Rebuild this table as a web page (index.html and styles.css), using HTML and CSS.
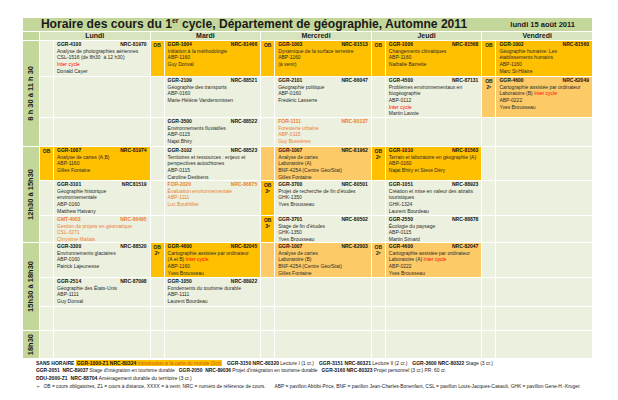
FILE: index.html
```html
<!DOCTYPE html>
<html lang="fr">
<head>
<meta charset="utf-8">
<title>Horaire des cours</title>
<link rel="stylesheet" href="styles.css">
</head>
<body>
<div class="sheet">
  <div class="titlebar">
    <div class="title">Horaire des cours du 1<sup class="sup">er</sup> cycle, Département de géographie, Automne 2011</div>
    <div class="date">lundi 15 août 2011</div>
  </div>
  <div class="corner"></div>
  <div class="day">Lundi</div>
  <div class="day">Mardi</div>
  <div class="day">Mercredi</div>
  <div class="day">Jeudi</div>
  <div class="day">Vendredi</div>

  <!-- r1 -->
  <div class="time span3"><span>8 h 30 à 11 h 30</span></div>
  <div class="ob"></div>
  <div class="cell"><div class="hd"><span>GGR-4100</span><span>NRC-81970</span></div>Analyse de photographies aériennes<br>CSL-1516 (de 8h30&nbsp; à 12 h30)<br><span class="red">Inter cycle</span><br>Donald Cayer</div>
  <div class="ob o">OB</div>
  <div class="cell o"><div class="hd"><span>GGR-1004</span><span>NRC-81466</span></div>Initiation à la méthodologie<br>ABP-1160<br>Guy Donval</div>
  <div class="ob o">OB</div>
  <div class="cell o"><div class="hd"><span>GGR-1003</span><span>NRC-81513</span></div>Dynamique de la surface terrestre<br>ABP-1160<br>(à venir)</div>
  <div class="ob o">OB</div>
  <div class="cell o"><div class="hd"><span>GGR-1006</span><span>NRC-81568</span></div>Changements climatiques<br>ABP-1160<br>Nathalie Barrette</div>
  <div class="ob o">OB</div>
  <div class="cell o"><div class="hd"><span>GGR-1002</span><span>NRC-81560</span></div>Géographie humaine: Les<br>établissements humains<br>ABP-1160<br>Marc St-Hilaire</div>

  <!-- r2 -->
  <div class="ob"></div>
  <div class="cell"></div>
  <div class="ob"></div>
  <div class="cell"><div class="hd"><span>GGR-2109</span><span>NRC-88521</span></div>Géographie des transports<br>ABP-0160<br>Marie-Hélène Vandersmissen</div>
  <div class="ob"></div>
  <div class="cell"><div class="hd"><span>GGR-2101</span><span>NRC-86047</span></div>Géographie politique<br>ABP-0160<br>Frédéric Lasserre</div>
  <div class="ob"></div>
  <div class="cell"><div class="hd"><span>GGR-4500</span><span>NRC-87131</span></div>Problèmes environnementaux en<br>biogéographie<br>ABP-0112<br><span class="red">Inter cycle</span><br>Martin Lavoie</div>
  <div class="ob lo">OB<br>2<sup class="sup2">e</sup></div>
  <div class="cell lo"><div class="hd"><span>GGR-4600</span><span>NRC-82049</span></div>Cartographie assistée par ordinateur<br>Laboratoire (B) <span class="red">Inter cycle</span><br>ABP-0222<br>Yves Brousseau</div>

  <!-- r3 -->
  <div class="ob"></div>
  <div class="cell"></div>
  <div class="ob"></div>
  <div class="cell"><div class="hd"><span>GGR-3500</span><span>NRC-88522</span></div>Environnements fluviatiles<br>ABP-0115<br>Najat Bhiry</div>
  <div class="ob"></div>
  <div class="cell ot"><div class="hd"><span>FOR-1111</span><span>NRC-80137</span></div>Foresterie urbaine<br>ABP-0115<br>Guy Bussières</div>
  <div class="ob"></div>
  <div class="cell"></div>
  <div class="ob"></div>
  <div class="cell"></div>

  <!-- r4 -->
  <div class="time span3"><span>12h30 à 15h30</span></div>
  <div class="ob o">OB</div>
  <div class="cell o"><div class="hd"><span>GGR-1007</span><span>NRC-81974</span></div>Analyse de cartes (A,B)<br>ABP-1160<br>Gilles Fontaine</div>
  <div class="ob"></div>
  <div class="cell"><div class="hd"><span>GGR-3102</span><span>NRC-88523</span></div>Territoires et ressources : enjeux et<br>perspectives autochtones<br>ABP-0115<br>Caroline Desbiens</div>
  <div class="ob lo"></div>
  <div class="cell lo"><div class="hd"><span>GGR-1007</span><span>NRC-81962</span></div>Analyse de cartes<br>Laboratoire (A)<br>BNF-4254 (Centre Géo/Stat)<br>Gilles Fontaine</div>
  <div class="ob o">OB<br>2<sup class="sup2">e</sup></div>
  <div class="cell o"><div class="hd"><span>GGR-1010</span><span>NRC-81563</span></div>Terrain et laboratoire en géographie (A)<br>ABP-0160<br>Najat Bhiry et Steve Déry</div>
  <div class="ob"></div>
  <div class="cell"></div>

  <!-- r5 -->
  <div class="ob"></div>
  <div class="cell"><div class="hd"><span>GGR-3101</span><span>NRC81519</span></div>Géographie historique<br>environnementale<br>ABP-0160<br>Matthew Hatvany</div>
  <div class="ob"></div>
  <div class="cell ot"><div class="hd"><span>FOR-2020</span><span>NRC-86875</span></div>Évaluation environnementale<br>ABP-1111<br>Luc Bouthillier</div>
  <div class="ob o">OB<br>3<sup class="sup2">e</sup></div>
  <div class="cell"><div class="hd"><span>GGR-3700</span><span>NRC-80501</span></div>Projet de recherche de fin d'études<br>GHK-1350<br>Yves Brousseau</div>
  <div class="ob"></div>
  <div class="cell"><div class="hd"><span>GGR-1051</span><span>NRC-88923</span></div>Création et mise en valeur des attraits<br>touristiques<br>GHK-1324<br>Laurent Bourdeau</div>
  <div class="ob"></div>
  <div class="cell"></div>

  <!-- r6 -->
  <div class="ob"></div>
  <div class="cell ot"><div class="hd"><span>GMT-4003</span><span>NRC-86495</span></div>Gestion de projets en géomatique<br>CSL-3271<br>Chrystine Maltais</div>
  <div class="ob"></div>
  <div class="cell"></div>
  <div class="ob o">OB<br>3<sup class="sup2">e</sup></div>
  <div class="cell"><div class="hd"><span>GGR-3701</span><span>NRC-80502</span></div>Stage de fin d'études<br>GHK-1350<br>Yves Brousseau</div>
  <div class="ob"></div>
  <div class="cell"><div class="hd"><span>GGR-2550</span><span>NRC-88878</span></div>Écologie du paysage<br>ABP-0115<br>Martin Simard</div>
  <div class="ob"></div>
  <div class="cell"></div>

  <!-- r7 -->
  <div class="time span3"><span>15h30 à 18h30</span></div>
  <div class="ob"></div>
  <div class="cell"><div class="hd"><span>GGR-3300</span><span>NRC-88520</span></div>Environnements glaciaires<br>ABP-0160<br>Patrick Lajeunesse</div>
  <div class="ob o">OB<br>2<sup class="sup2">e</sup></div>
  <div class="cell o"><div class="hd"><span>GGR-4600</span><span>NRC-82045</span></div>Cartographie assistée par ordinateur<br>(A et B) <span class="red">Inter cycle</span><br>ABP-1160<br>Yves Brousseau</div>
  <div class="ob lo"></div>
  <div class="cell lo"><div class="hd"><span>GGR-1007</span><span>NRC-82003</span></div>Analyse de cartes<br>Laboratoire (B)<br>BNF-4254 (Centre Géo/Stat)<br>Gilles Fontaine</div>
  <div class="ob lo">OB<br>2<sup class="sup2">e</sup></div>
  <div class="cell lo"><div class="hd"><span>GGR-4600</span><span>NRC-82047</span></div>Cartographie assistée par ordinateur<br>Laboratoire (A) <span class="red">Inter cycle</span><br>ABP-0222<br>Yves Brousseau</div>
  <div class="ob"></div>
  <div class="cell"></div>

  <!-- r8 -->
  <div class="ob"></div>
  <div class="cell"><div class="hd"><span>GGR-2514</span><span>NRC-87098</span></div>Géographie des États-Unis<br>ABP-1111<br>Guy Donval</div>
  <div class="ob"></div>
  <div class="cell"><div class="hd"><span>GGR-1050</span><span>NRC-88922</span></div>Fondements du tourisme durable<br>ABP-1111<br>Laurent Bourdeau</div>
  <div class="ob"></div>
  <div class="cell"></div>
  <div class="ob"></div>
  <div class="cell"></div>
  <div class="ob"></div>
  <div class="cell"></div>

  <!-- r9 -->
  <div class="ob"></div>
  <div class="cell"></div>
  <div class="ob"></div>
  <div class="cell"></div>
  <div class="ob"></div>
  <div class="cell"></div>
  <div class="ob"></div>
  <div class="cell"></div>
  <div class="ob"></div>
  <div class="cell"></div>

  <!-- r10 -->
  <div class="time"><span>18h30</span></div>
  <div class="ob"></div>
  <div class="cell"></div>
  <div class="ob"></div>
  <div class="cell"></div>
  <div class="ob"></div>
  <div class="cell"></div>
  <div class="ob"></div>
  <div class="cell"></div>
  <div class="ob"></div>
  <div class="cell"></div>
</div>

<div class="foot">
  <div class="l1"><b>SANS HORAIRE</b> <span class="hl"><b>GGR-1000-Z1 NRC-80324</b> <span class="hlt">Introduction à la carte du monde (3cr)</span></span><span class="g"><b>GGR-3150 NRC-80320</b> Lecture I (1 cr.)</span><span class="g"><b>GGR-3151 NRC-80321</b> Lecture II (2 cr.)</span><span class="g"><b>GGR-3600 NRC-80322</b> Stage (3 cr.)</span></div>
  <div class="l2"><b>GGR-2051</b>&nbsp; <b>NRC-89037</b> Stage d'intégration en tourisme durable<span class="g"><b>GGR-2050</b>&nbsp; <b>NRC-89036</b> Projet d'intégration en tourisme durable</span><span class="g"><b>GGR-3160 NRC-80323</b> Projet personnel (3 cr.) PR: 60 cr.</span></div>
  <div class="l3"><b>DDU-2000-Z1&nbsp; NRC-88704</b> Aménagement durable du territoire (3 cr.)</div>
  <div class="l4"><span class="arrow">➢</span> OB = cours obligatoires, Z1 = cours à distance, XXXX = à venir, NRC = numéro de référence de cours.<span class="g2">ABP = pavillon Abitibi-Price, BNF = pavillon Jean-Charles-Bonenfant, CSL = pavillon Louis-Jacques-Casault, GHK = pavillon Gene-H.-Kruger.</span></div>
</div>
</body>
</html>
```

FILE: styles.css
```css
html, body {
  margin: 0;
  padding: 0;
  background: #ffffff;
}

body {
  font-family: "Liberation Sans", Arial, sans-serif;
  color: #1f1f1f;
}

.sheet {
  margin: 18px 0 0 23px;
  width: 569px;
  display: grid;
  grid-template-columns: 16px repeat(5, 13px 95.6px);
  grid-template-rows: 13px 8px 35px 40px 28px 33px 34px 26px 34px 28px 23px 27px;
  gap: 1px;
  background: #ffffff;
}

.titlebar {
  grid-column: 1 / -1;
  background: #c4d79b;
  display: flex;
  align-items: center;
}

.title {
  width: 462px;
  text-align: center;
  font-weight: bold;
  font-size: 12.1px;
  line-height: 13px;
  color: #1a1a1a;
  white-space: nowrap;
}

.sup {
  font-size: 7px;
  line-height: 0;
  vertical-align: 5px;
}

.date {
  flex: 1;
  text-align: right;
  padding-right: 17px;
  font-size: 7.5px;
  font-weight: bold;
  line-height: 13px;
  color: #1a1a1a;
  white-space: nowrap;
}

.corner {
  background: #c4d79b;
}

.day {
  grid-column: span 2;
  background: #d7e4bd;
  text-align: center;
  font-weight: bold;
  font-size: 7px;
  line-height: 8px;
  color: #1a1a1a;
}

.time {
  grid-column: 1;
  background: #c4d79b;
  display: flex;
  align-items: center;
  justify-content: center;
}

.span3 {
  grid-row: span 3;
}

.time span {
  writing-mode: vertical-rl;
  transform: rotate(180deg);
  font-weight: bold;
  font-size: 7.5px;
  line-height: 8px;
  white-space: nowrap;
  color: #1a1a1a;
}

.ob,
.cell {
  background: #ebf1de;
  font-size: 5px;
  line-height: 6.6px;
  overflow: hidden;
  white-space: nowrap;
}

.ob {
  text-align: center;
  font-weight: bold;
  padding-top: 0.5px;
  color: #1a1a1a;
}

.cell {
  padding: 0.3px 3px 0;
  color: #2a2a2a;
}

.hd {
  display: flex;
  justify-content: space-between;
  font-weight: bold;
  color: #111111;
}

.o {
  background: #ffc000;
}

.lo {
  background: #fdca68;
}

.ot,
.ot .hd {
  color: #ed7d31;
}

.red {
  color: #ff0000;
}

.sup2 {
  font-size: 3.5px;
  line-height: 0;
  vertical-align: 1.5px;
}

.foot {
  margin: 1px 0 0 36px;
  font-size: 4.9px;
  color: #222222;
  white-space: nowrap;
}

.foot b {
  color: #111111;
}

.l1 {
  height: 8px;
  line-height: 8px;
  font-size: 5px;
}

.l1 .g {
  margin-left: 5px;
}

.l2 {
  height: 8px;
  line-height: 8px;
  font-size: 4.9px;
}

.l3 {
  height: 7px;
  line-height: 7px;
  font-size: 5.1px;
}

.l4 {
  height: 9px;
  line-height: 9px;
}

.hl {
  background: #ffc000;
  padding: 0 1px;
}

.hlt {
  color: #c65911;
}

.g {
  margin-left: 4px;
}

.g2 {
  margin-left: 9px;
}

.arrow {
  font-family: "DejaVu Sans", sans-serif;
  margin-right: 2px;
}
```
